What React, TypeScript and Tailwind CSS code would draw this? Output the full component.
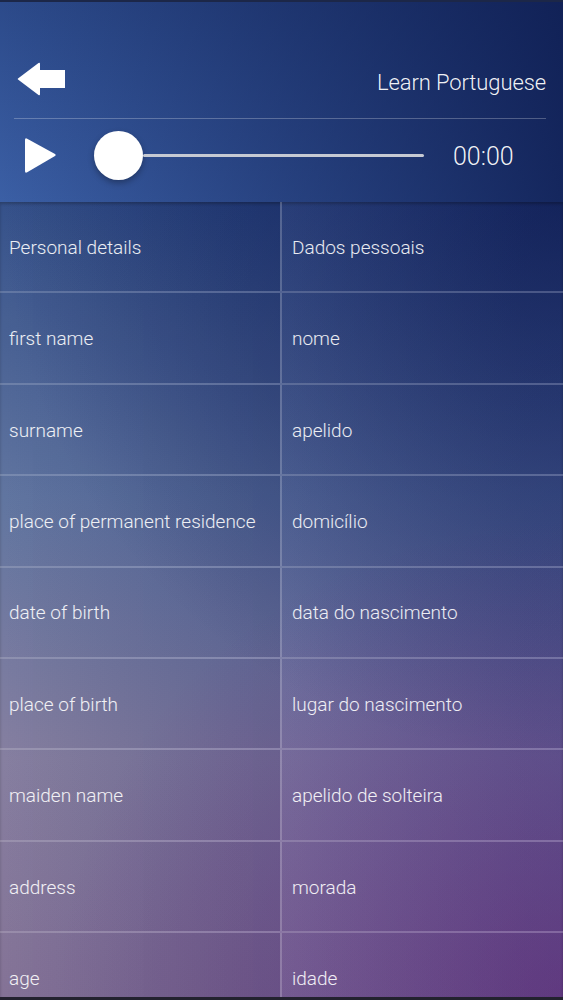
const rows: [string, string][] = [
  ['Personal details', 'Dados pessoais'],
  ['first name', 'nome'],
  ['surname', 'apelido'],
  ['place of permanent residence', 'domicílio'],
  ['date of birth', 'data do nascimento'],
  ['place of birth', 'lugar do nascimento'],
  ['maiden name', 'apelido de solteira'],
  ['address', 'morada'],
  ['age', 'idade'],
];

function BackArrow() {
  return (
    <svg width="50" height="36" viewBox="0 0 50 36" fill="white">
      <path d="M1 16.5 L21.5 1 Q23 0 23 2 L23 8 L48 8 L48 26 L23 26 L23 32 Q23 34 21.5 33 L1 17.5 Q0.3 17 1 16.5 Z" />
    </svg>
  );
}

function PlayIcon() {
  return (
    <svg width="33" height="37" viewBox="0 0 33 37" fill="white">
      <path d="M1 3 Q1 0.5 3.2 1.7 L31 17 Q32.6 18 31 19 L3.2 35.3 Q1 36.5 1 34 Z" />
    </svg>
  );
}

export default function App() {
  return (
    <div className="w-full h-[1000px] overflow-hidden flex flex-col font-['Roboto','Liberation_Sans',sans-serif] font-light text-white bg-[#1b1d2e]">
      <header className="h-[202px] shrink-0 flex flex-col border-t-2 border-[#1c2748] bg-[linear-gradient(to_right,rgba(8,20,70,0)_0%,rgba(8,20,70,0.35)_45%,rgba(8,20,70,0.75)_100%),linear-gradient(to_bottom,#2c4a8a,#3b5fa5)]">
        <div className="mt-[58px] h-10 flex items-center justify-between pl-[17px] pr-[17px]">
          <BackArrow />
          <span className="mt-[5px] text-[22px] tracking-[-0.1px] text-white/95">Learn Portuguese</span>
        </div>
        <div className="mt-[18px] ml-[14px] mr-[17px] h-px bg-white/25" />
        <div className="h-[72px] flex items-center pl-[24px]">
          <PlayIcon />
          <div className="ml-[37px] w-[330px] flex items-center">
            <div className="w-[49px] h-[49px] rounded-full bg-white shadow-[0_3px_6px_rgba(0,0,0,0.3)] shrink-0" />
            <div className="flex-1 h-[3px] bg-[#c6cad3] rounded-full" />
          </div>
          <span className="ml-[29px] mt-[3px] text-[25px] text-white/95">00:00</span>
        </div>
      </header>
      <div className="flex-1 flex flex-col overflow-hidden shadow-[inset_0_2px_3px_rgba(0,0,0,0.25)] bg-[radial-gradient(ellipse_90%_60%_at_100%_100%,rgba(110,20,120,0.4),rgba(110,20,120,0)),radial-gradient(ellipse_100%_70%_at_100%_0%,rgba(10,20,70,0.6),rgba(10,20,70,0)),linear-gradient(to_right,rgba(20,40,140,0),rgba(20,40,140,0.3)),linear-gradient(to_bottom,#2d4a85_0%,#5a6f9c_37%,#817a9c_70%,#7f6c92_100%)]">
        {rows.map(([en, pt]) => (
          <div key={en} className="h-[91.375px] shrink-0 flex border-b-2 border-white/20">
            <div className="w-[282px] shrink-0 flex items-center pl-[9px] pt-[3px] text-[19px] text-white/90 border-r-2 border-white/20 bg-linear-to-r from-white/[0.04] to-black/[0.05]">
              {en}
            </div>
            <div className="flex-1 flex items-center pl-[10px] pt-[3px] text-[19px] text-white/90 bg-linear-to-r from-white/[0.04] to-black/[0.05]">
              {pt}
            </div>
          </div>
        ))}
      </div>
      <div className="h-[3px] shrink-0 bg-[#23222f]" />
    </div>
  );
}
